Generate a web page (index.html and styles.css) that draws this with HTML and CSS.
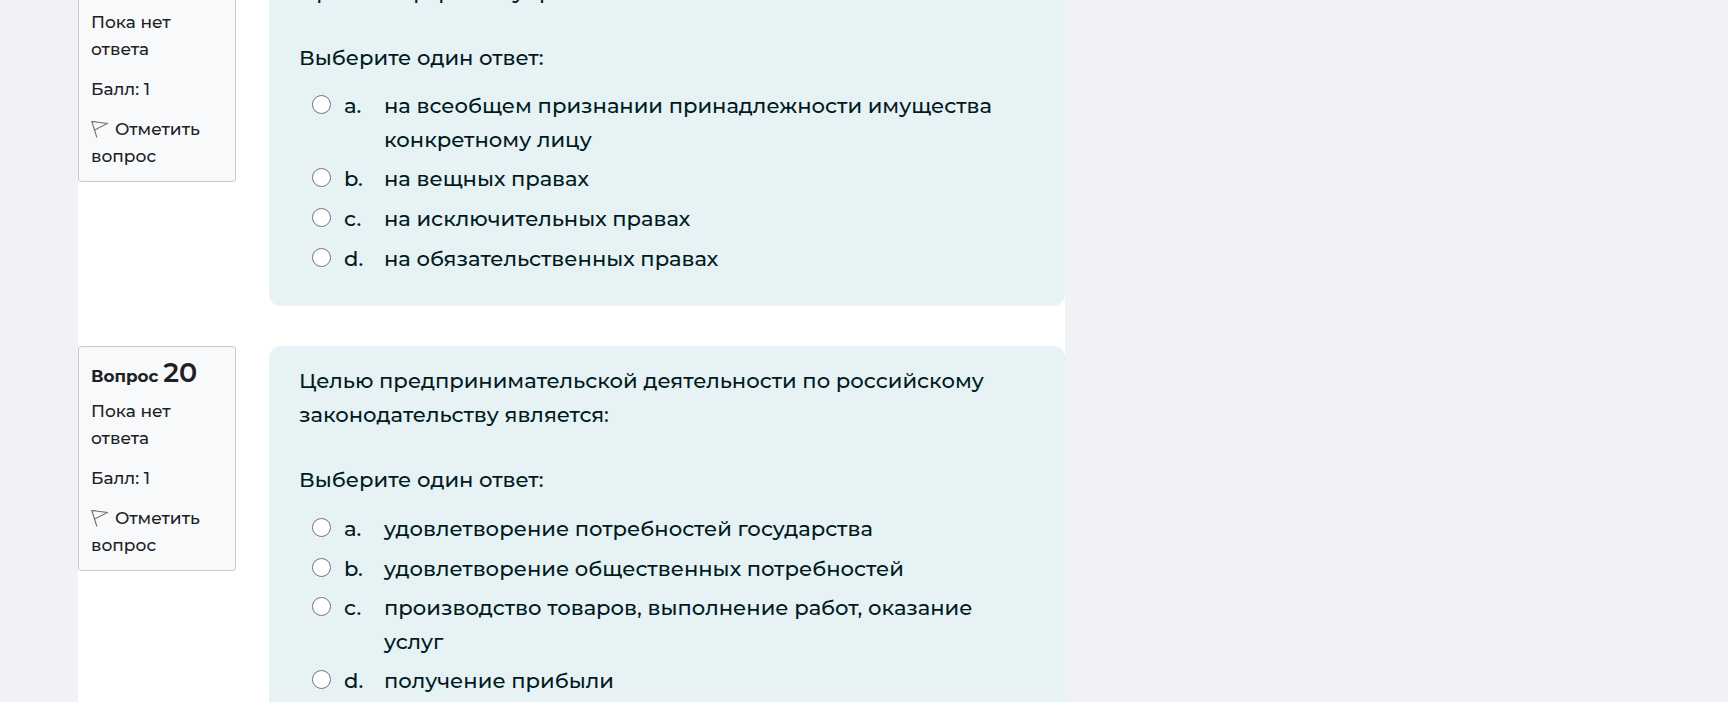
FILE: index.html
```html
<!DOCTYPE html>
<html lang="ru">
<head>
<meta charset="utf-8">
<title>Тест</title>
<link rel="stylesheet" href="styles.css">
</head>
<body>
<main class="page">
  <section class="que first">
    <aside class="info">
      <h3 class="no">Вопрос <span class="num">19</span></h3>
      <p class="state">Пока нет ответа</p>
      <p class="grade">Балл: 1</p>
      <p class="flag"><svg class="flag-icon" viewBox="0 0 16 16"><path d="M.8 .5 L5.5 15.5 L3.4 8.6 L15.5 2.4 Z M.8 .5 L4 .5" fill="none" stroke="#707070" stroke-width="1"/></svg>Отметить вопрос</p>
    </aside>
    <div class="content">
      <p class="qtext">Право на формы и управление основано на таких началах:</p>
      <p class="prompt">Выберите один ответ:</p>
      <ul class="answers">
        <li><span class="radio"></span><span class="letter">a.</span><span class="text">на всеобщем признании принадлежности имущества конкретному лицу</span></li>
        <li><span class="radio"></span><span class="letter">b.</span><span class="text">на вещных правах</span></li>
        <li><span class="radio"></span><span class="letter">c.</span><span class="text">на исключительных правах</span></li>
        <li><span class="radio"></span><span class="letter">d.</span><span class="text">на обязательственных правах</span></li>
      </ul>
    </div>
  </section>
  <section class="que">
    <aside class="info">
      <h3 class="no">Вопрос <span class="num">20</span></h3>
      <p class="state">Пока нет ответа</p>
      <p class="grade">Балл: 1</p>
      <p class="flag"><svg class="flag-icon" viewBox="0 0 16 16"><path d="M.8 .5 L5.5 15.5 L3.4 8.6 L15.5 2.4 Z M.8 .5 L4 .5" fill="none" stroke="#707070" stroke-width="1"/></svg>Отметить вопрос</p>
    </aside>
    <div class="content">
      <p class="qtext">Целью предпринимательской деятельности по российскому законодательству является:</p>
      <p class="prompt">Выберите один ответ:</p>
      <ul class="answers">
        <li><span class="radio"></span><span class="letter">a.</span><span class="text">удовлетворение потребностей государства</span></li>
        <li><span class="radio"></span><span class="letter">b.</span><span class="text">удовлетворение общественных потребностей</span></li>
        <li><span class="radio"></span><span class="letter">c.</span><span class="text">производство товаров, выполнение работ, оказание услуг</span></li>
        <li><span class="radio"></span><span class="letter">d.</span><span class="text">получение прибыли</span></li>
      </ul>
    </div>
  </section>
</main>
</body>
</html>
```
FILE: styles.css
```css
html, body { margin: 0; height: 702px; overflow: hidden; background: #f1f2f6; }
body { font-family: "Montserrat", "Inter", "Noto Sans", sans-serif; color: #1d2125; }
p, h3, ul { margin: 0; padding: 0; }
.page { margin-left: 78px; width: 987px; background: #fff; margin-top: -43px; padding-bottom: 60px; }
.que { display: flex; gap: 33px; margin-bottom: 40px; align-items: flex-start; }
.info { width: 132px; flex: none; background: #f8f9fa; border: 1px solid #c8ccd2; border-radius: 3px; padding: 11px 12px 11px; font-size: 17px; font-weight: 500; line-height: 27px; }
.no { font-size: 16.8px; font-weight: 700; line-height: 30px; margin-bottom: 7px; }
.num { font-size: 27px; font-weight: 600; }
.state { margin-bottom: 13px; }
.grade { margin-bottom: 12.5px; }
.flag-icon { width: 17px; height: 17px; margin-right: 7px; vertical-align: -3px; }
.content { flex: 1; background: #e6f2f4; border-radius: 12px; padding: 18px 36px 25px 30px; color: #001a1e; font-size: 21.1px; font-weight: 500; line-height: 33.6px; }
.qtext { margin-bottom: 32px; }
.prompt { margin-bottom: 15px; }
.answers { list-style: none; }
.answers li { display: flex; align-items: flex-start; margin-bottom: 6px; }
.radio { flex: none; width: 17px; height: 17px; border: 1.5px solid #6f757a; border-radius: 50%; background: #fff; margin: 6px 13px 0 13px; }
.letter { flex: none; width: 40px; }
.text { flex: 1; }
```
